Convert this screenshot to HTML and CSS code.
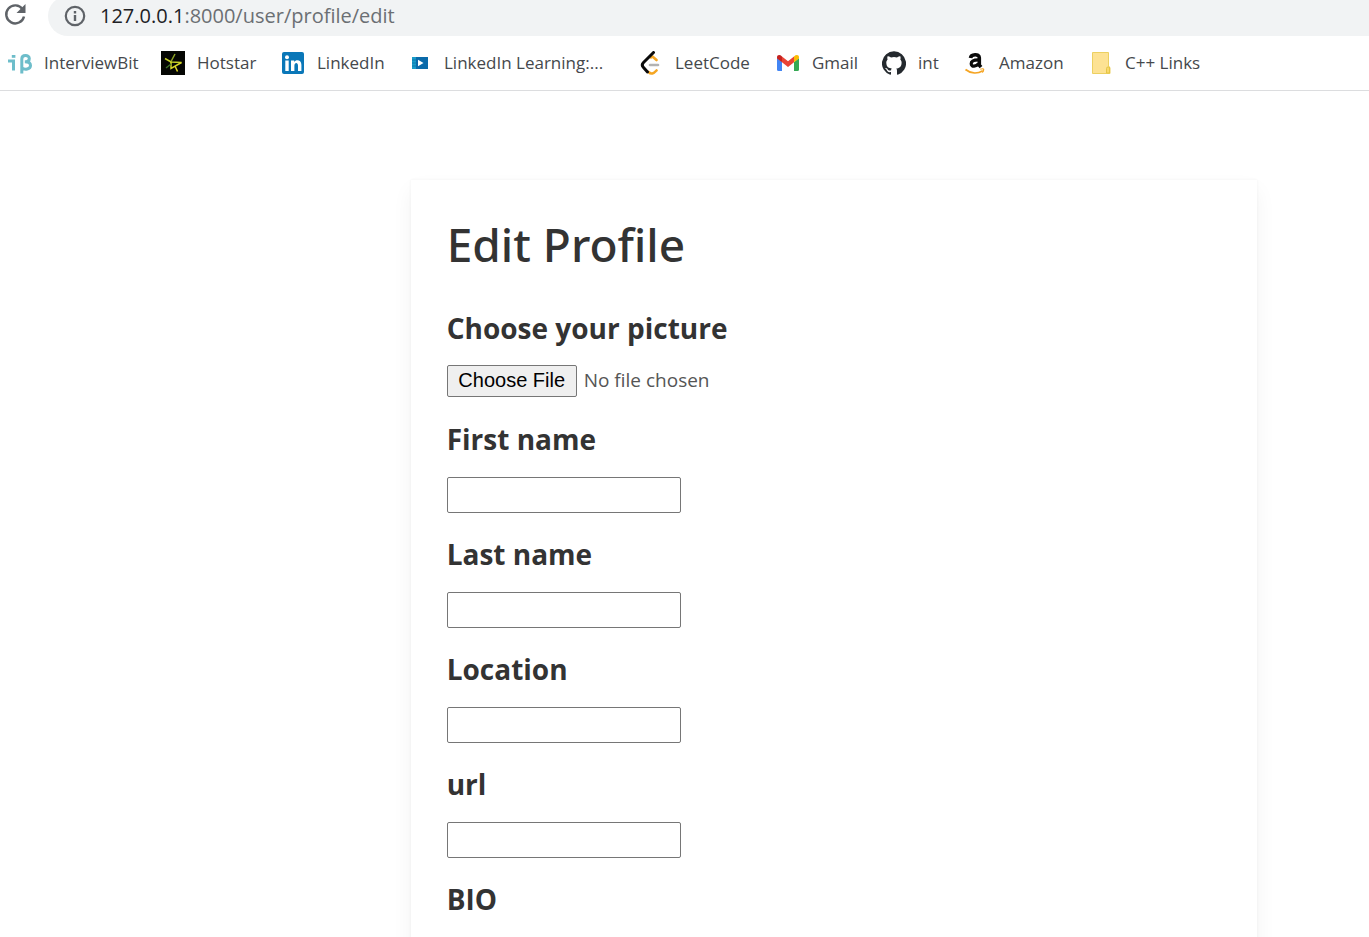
FILE: index.html
```html
<!DOCTYPE html>
<html lang="en">
<head>
<meta charset="utf-8">
<title>Edit Profile</title>
<link rel="stylesheet" href="styles.css">
</head>
<body>
<header class="browser">
  <div class="toolbar">
    <button class="reload" type="button" aria-label="Reload">
      <svg width="24" height="24" viewBox="0 0 24 24"><path d="M18.600 7.200A9 9 0 1 0 20 14.400" fill="none" stroke="#5f6368" stroke-width="2.400"/><path d="M21.500 2v9h-9z" fill="#5f6368"/></svg>
    </button>
    <div class="omnibox">
      <svg width="22" height="22" viewBox="0 0 22 22"><circle cx="11" cy="11" r="9.200" fill="none" stroke="#5f6368" stroke-width="2.200"/><path d="M9.800 10h2.400v6H9.800zM9.800 6h2.400v2.400H9.800z" fill="#5f6368"/></svg>
      <div class="address" role="textbox" aria-label="Address" contenteditable="true" spellcheck="false"><span class="address-host">127.0.0.1</span>:8000/user/profile/edit</div>
    </div>
  </div>
  <nav class="bookmarks" aria-label="Bookmarks">
    <a class="bookmark" href="#"><svg class="icon" viewBox="0 0 24 24"><g fill="none" stroke="#6dbdca" stroke-width="3"><path d="M0 10h5.500v9.500"/><path d="M13.800 22.500V8c0-4.500 7.500-4.500 7.500-.5 0 2.600-2 3.300-4.500 3.300 3.500 0 5.700 1 5.700 3.700 0 4-5.800 4.500-8.500 2.500"/></g><path d="M3.800 4h3.600v2.800H3.800z" fill="#6dbdca"/></svg>InterviewBit</a>
    <a class="bookmark" href="#"><svg class="icon" viewBox="0 0 24 24"><path d="M0 0h24v24H0z" fill="#050603"/><g fill="none" stroke-width="1.500"><path d="M14 3 9.500 11.500" stroke="#8ea324"/><path d="M4 7.500 10 11l10.500.500" stroke="#c4cf26"/><path d="M20.500 11.500 10 17.500V11" stroke="#d4d528"/><path d="m14 15 2.500 5.500" stroke="#e1d929"/><path d="m5 17 5-4" stroke="#3e7429"/></g></svg>Hotstar</a>
    <a class="bookmark" href="#"><svg class="icon" viewBox="0 0 24 24"><rect x="1" y="1" width="22" height="22" rx="2" fill="#0a77b8"/><g fill="#fff"><circle cx="6" cy="6.200" r="2"/><path d="M4.300 9.500h3.400V20H4.300zM10 9.500h3.200v1.600c1.600-3 7.200-2.600 7.200 2.700V20H17v-5.300c0-3.700-3.600-3.300-3.600 0V20H10z"/></g></svg>LinkedIn</a>
    <a class="bookmark" href="#"><svg class="icon" viewBox="0 0 24 24"><path d="M4 6h16v12H4z" fill="#0a6aaa"/><path d="M4 6h4v12H4z" fill="#199bc8"/><path d="M4 9h4M4 12h4M4 15h4" stroke="#0c78ad"/><path d="m10 8.800 5.500 3.200-5.500 3.200z" fill="#fff"/></svg>LinkedIn Learning:...</a>
    <a class="bookmark" href="#"><svg class="icon" viewBox="0 0 24 24"><g fill="none" stroke-width="2.600" stroke-linecap="round" stroke-linejoin="round"><path d="m12 6.500 1.500-1 4 3.500M9.500 21c2.500 2.500 5 1.800 8-1.500" stroke="#f5a623"/><path d="M11 14h8" stroke="#b3b3b3"/><path d="M14.500 1.500 4.500 11.500c-1.700 1.800-1.700 3.300 0 5L8.500 21" stroke="#0b0b0b" stroke-width="3"/></g></svg>LeetCode</a>
    <a class="bookmark" href="#"><svg class="icon" viewBox="0 0 24 24"><path d="M1 7l5 4v9H2.500Q1 20 1 18.500z" fill="#4285f4"/><path d="M18 11l5-4v11.500q0 1.500-1.500 1.500H18z" fill="#34a853"/><path d="m6 5.500 6 4.700 6-4.700v5.800L12 16l-6-4.700z" fill="#ea4335"/><path d="M1 6.500C1 3.700 3.800 3.300 6 5.500v5.800L1 7.500z" fill="#c5221f"/><path d="M23 6.500c0-2.800-2.800-3.200-5-1v5.800l5-3.800z" fill="#fbbc04"/></svg>Gmail</a>
    <a class="bookmark" href="#"><svg class="icon" viewBox="0 0 24 24"><path fill="#24292e" d="M12 .3a12 12 0 0 0-3.800 23.400c.6.100.8-.3.800-.6v-2c-3.300.7-4-1.600-4-1.600-.6-1.400-1.400-1.800-1.400-1.800-1-.7.100-.7.100-.7 1.200 0 1.900 1.200 1.900 1.200 1 1.800 2.800 1.300 3.500 1 0-.8.400-1.300.7-1.600-2.700-.3-5.500-1.300-5.500-6 0-1.200.5-2.300 1.300-3.100-.2-.4-.6-1.600 0-3.200 0 0 1-.3 3.400 1.200a11.500 11.500 0 0 1 6 0c2.300-1.500 3.300-1.200 3.300-1.200.6 1.600.2 2.800 0 3.200.9.800 1.300 1.900 1.300 3.200 0 4.600-2.800 5.600-5.500 5.900.5.400.9 1 .9 2.200v3.300c0 .3.100.7.800.6A12 12 0 0 0 12 .3"/></svg>int</a>
    <a class="bookmark" href="#"><svg class="icon" viewBox="0 0 24 24"><path d="M7.500 7c.5-4 8.800-4.600 8.800-.3v7.500l1.700 2" fill="none" stroke="#0b0b0b" stroke-width="3.600"/><path d="M15.500 8.800c-5 0-7.300 1-7.300 3.900 0 3.500 5.300 3 7.300-.2" fill="none" stroke="#0b0b0b" stroke-width="3.200"/><path d="M2.500 18.500c5.500 4.400 12.200 4.300 17.300 1.300" fill="none" stroke="#f5a524" stroke-width="1.800"/><path d="M17.200 18.200c2-.8 3.600-.4 3.500.3 0 1-.6 2.300-1.500 3" fill="none" stroke="#f5a524" stroke-width="1.200"/></svg>Amazon</a>
    <a class="bookmark" href="#"><svg class="icon" viewBox="0 0 24 24"><path d="M3.500 1.500h16v14l1.500 1v6H3.500z" fill="#fde293" stroke="#ecd061"/><path d="M17.500 22v-4.500q0-1.500 1.500-1.500h1.500v6z" fill="#f9d86b" stroke="#e5c546"/></svg>C++ Links</a>
  </nav>
</header>
<main class="page">
  <form class="card">
    <h1 class="title">Edit Profile</h1>
    <div class="fields">
      <div class="field field-file"><label class="label" for="picture">Choose your picture</label><input class="file" id="picture" type="file"></div>
      <div class="field"><label class="label" for="first">First name</label><input class="text" id="first" type="text"></div>
      <div class="field"><label class="label" for="last">Last name</label><input class="text" id="last" type="text"></div>
      <div class="field"><label class="label" for="location">Location</label><input class="text" id="location" type="text"></div>
      <div class="field"><label class="label" for="url">url</label><input class="text" id="url" type="text"></div>
      <div class="field"><label class="label" for="bio">BIO</label><textarea class="text" id="bio"></textarea></div>
    </div>
  </form>
</main>
</body>
</html>
```
FILE: styles.css
```css
* { box-sizing: border-box; }
body {
  margin: 0;
  height: 100vh;
  overflow: hidden;
  background: #fff;
  color: #333;
  font-family: "Open Sans", "Noto Sans", sans-serif;
}
.browser { border-bottom: 1px solid #dcdddf; }
.toolbar {
  display: flex;
  align-items: center;
  gap: 20px;
  margin-top: -4px;
  padding-left: 4px;
}
.reload {
  display: flex;
  padding: 0 0 4px;
  border: 0;
  background: none;
}
.omnibox {
  flex: 1;
  display: flex;
  align-items: center;
  gap: 14px;
  height: 40px;
  padding-left: 16px;
  border-radius: 20px 0 0 20px;
  background: #f1f3f4;
}
.address { color: #6b6f73; font-size: 20px; line-height: 28px; white-space: nowrap; }
.address-host { color: #202124; }
.bookmarks {
  display: grid;
  grid-template-columns: 153px 120px 127px 231px 137px 106px 81px 126px auto;
  height: 54px;
  padding: 0 0 1px 8px;
}
.bookmark {
  display: flex;
  align-items: center;
  gap: 12px;
  color: #45484c;
  font-size: 17px;
  text-decoration: none;
  white-space: nowrap;
}
.icon { flex: none; width: 24px; height: 24px; }
.page { padding: 89px 112px 0 30%; }
.card {
  padding: 34px 36px 80px;
  background: #fff;
  box-shadow: 0 10px 20px rgba(0, 0, 0, 0.05), 0 0 3px rgba(0, 0, 0, 0.05);
}
.title {
  margin: 0 0 35px;
  font-family: "Noto Sans", "Open Sans", sans-serif;
  font-size: 46px;
  font-weight: 500;
  line-height: 60px;
}
.fields { display: grid; gap: 22px; }
.field { display: flex; flex-direction: column; align-items: flex-start; gap: 19px; }
.field-file { gap: 17px; }
.label { font-size: 28px; font-weight: 700; line-height: 38px; }
.text {
  width: 234px;
  height: 36px;
  border: 1px solid #767676;
  border-radius: 2px;
  background: #fff;
  font: 20px "Liberation Sans", sans-serif;
}
.file { height: 34px; color: #555; font: 19px/32px "Open Sans", sans-serif; }
.file::file-selector-button {
  width: 130px;
  height: 32px;
  margin: 0 7px 0 0;
  padding: 0;
  border: 1px solid #767676;
  border-radius: 2px;
  background: #efefef;
  color: #000;
  font: 20px "Liberation Sans", sans-serif;
}
```
